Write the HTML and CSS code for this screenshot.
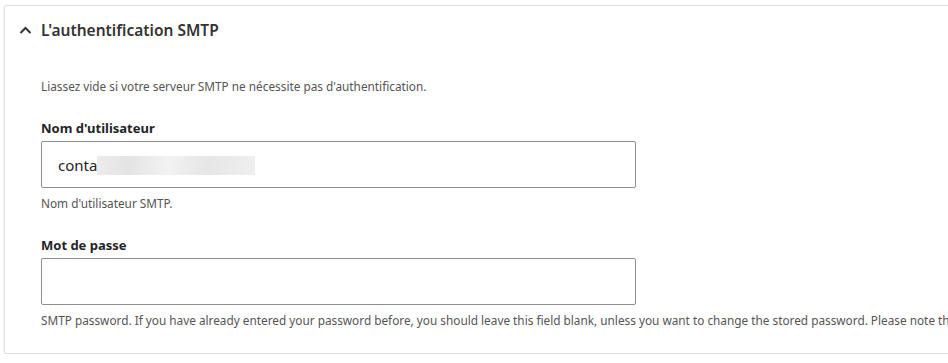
FILE: index.html
```html
<!DOCTYPE html>
<html>

<head>
    <title>SMTP</title>
    <link rel="stylesheet" href="styles.css">
</head>

<body>
    <div class="smtp-card">
        <div class="smtp-summary">
            <svg class="smtp-chevron" viewBox="0 0 13 8" width="13" height="8">
                <path d="M1.5 7 L6.5 2 L11.5 7" fill="none" stroke="#333" stroke-width="2"/>
            </svg>
            <span class="smtp-title">L'authentification SMTP</span>
        </div>
        <div class="smtp-body">
            <div class="smtp-intro">Liassez vide si votre serveur SMTP ne nécessite pas d'authentification.</div>

            <div class="smtp-field">
                <div class="smtp-label">Nom d'utilisateur</div>
                <div class="smtp-input">
                    <span>conta</span><span class="smtp-blur"></span>
                </div>
                <div class="smtp-help">Nom d'utilisateur SMTP.</div>
            </div>

            <div class="smtp-field">
                <div class="smtp-label">Mot de passe</div>
                <div class="smtp-input"></div>
                <div class="smtp-help">SMTP password. If you have already entered your password before, you should leave this field blank, unless you want to change the stored password. Please note this password will be stored as plain text.</div>
            </div>
        </div>
    </div>
</body>

</html>
```

FILE: styles.css
```css
body {
    font-family: "Noto Sans", sans-serif;
    background-color: #fff;
    color: #232429;
    margin: 0;
    padding: 5px 0 0 4px;
    overflow: hidden;
}

.smtp-card {
    width: 1000px;
    height: 349px;
    box-sizing: border-box;
    border: 1px solid #dedede;
    border-radius: 2px;
    box-shadow: 0 1px 2px rgba(0, 0, 0, 0.12);
    background-color: #fff;
    overflow: hidden;
}

.smtp-summary {
    display: flex;
    align-items: center;
    height: 48px;
    padding-left: 14px;
}

.smtp-chevron {
    margin-right: 9px;
}

.smtp-title {
    font-size: 15.5px;
    font-weight: 600;
    color: #333;
}

.smtp-body {
    padding: 24px 0 0 36px;
}

.smtp-intro {
    font-size: 11.8px;
    color: #555;
    margin-bottom: 25px;
}

.smtp-field {
    margin-bottom: 25px;
}

.smtp-label {
    font-size: 13px;
    font-weight: 700;
    color: #232429;
    margin-bottom: 4px;
}

.smtp-input {
    width: 595px;
    height: 47px;
    box-sizing: border-box;
    border: 1px solid #8e8e92;
    border-radius: 2px;
    display: flex;
    align-items: center;
    padding-left: 16px;
    font-size: 15px;
    color: #232429;
}

.smtp-blur {
    display: inline-block;
    width: 158px;
    height: 19px;
    margin-top: 2px;
    background: linear-gradient(90deg, #ececec, #e4e4e4 20%, #f2f2f2 45%, #e6e6e6 70%, #efefef);
}

.smtp-help {
    font-size: 11.8px;
    color: #555;
    margin-top: 7px;
    white-space: nowrap;
}
```
